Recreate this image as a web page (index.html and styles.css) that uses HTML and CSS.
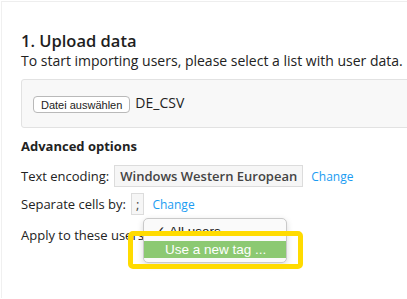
FILE: index.html
```html
<!DOCTYPE html>
<html lang="en">
<head>
    <meta charset="UTF-8">
    <meta name="viewport" content="width=device-width, initial-scale=1.0">
    <title>Import users</title>
    <link rel="stylesheet" href="styles.css">
</head>
<body>

<div class="page">
    <h1 class="step-title">1. Upload data</h1>
    <p class="step-text">To start importing users, please select a list with user data.</p>

    <div class="upload-box">
        <button class="file-button">Datei auswählen</button>
        <span class="file-name">DE_CSV</span>
    </div>

    <h2 class="options-title">Advanced options</h2>

    <div class="options">
        <div class="option-row">
            <span class="option-label">Text encoding:</span>
            <span class="option-value">Windows Western European</span>
            <a class="option-link" href="#">Change</a>
        </div>
        <div class="option-row">
            <span class="option-label">Separate cells by:</span>
            <span class="option-value small">;</span>
            <a class="option-link" href="#">Change</a>
        </div>
        <div class="option-row apply-row">
            <span class="option-label">Apply to these users:</span>

            <div class="menu">
                <div class="menu-item"><span class="check">✓</span>All users</div>
                <div class="menu-item active">Use a new tag ...</div>
            </div>
            <div class="highlight"></div>
        </div>
    </div>
</div>

</body>
</html>
```

FILE: styles.css
```css
body {
    margin: 0;
    background-color: #fff;
    font-family: "Open Sans", "Noto Sans", sans-serif;
    color: #222;
}
.page {
    margin: 1px 0 0 1px;
    border-top: 1px solid #eeeeee;
    border-left: 1px solid #f0f0f0;
    min-height: 297px;
    box-sizing: border-box;
    padding: 28px 0 0 19px;
    overflow: hidden;
}
.step-title {
    margin: 0;
    font-size: 16.5px;
    line-height: 22px;
    font-weight: 600;
    color: #1e1e1e;
}
.step-text {
    margin: 1px 0 0;
    font-size: 14px;
    line-height: 16px;
    white-space: nowrap;
}
.upload-box {
    margin-top: 10px;
    margin-right: -20px;
    height: 45px;
    display: flex;
    align-items: center;
    gap: 5px;
    padding: 2px 11px 0;
    background-color: #f8f8f8;
    border: 1px solid #e2e2e2;
    border-radius: 3px;
}
.file-button {
    height: 17px;
    padding: 0 7px;
    font-family: "Liberation Sans", Arial, sans-serif;
    font-size: 11px;
    color: #222;
    background-color: #fff;
    border: 1px solid #b9b9b9;
    border-radius: 4px;
}
.file-name {
    font-size: 14px;
    margin-top: -5px;
}
.options-title {
    margin: 9px 0 0;
    font-size: 13px;
    line-height: 18px;
    font-weight: 700;
}
.options {
    margin-top: 10px;
    display: flex;
    flex-direction: column;
    gap: 6px;
}
.option-row {
    display: flex;
    align-items: center;
    height: 22px;
    font-size: 13px;
}
.option-label {
    margin-right: 5px;
    white-space: nowrap;
}
.option-value {
    height: 22px;
    box-sizing: border-box;
    display: flex;
    align-items: center;
    padding: 0 5px;
    font-weight: 600;
    color: #444;
    background-color: #f6f6f6;
    border: 1px solid #dcdcdc;
}
.option-value.small {
    padding: 0 4px;
    font-weight: 400;
}
.option-link {
    margin-left: 8px;
    font-size: 12px;
    color: #1a9cf2;
    text-decoration: none;
}
.apply-row {
    position: relative;
    margin-top: 3px;
}
.menu {
    position: absolute;
    left: 122px;
    top: -6px;
    width: 142px;
    padding: 0 0 4px;
    background-color: #fafafa;
    border: 1px solid #c9c9c9;
    border-radius: 5px;
    box-shadow: 0 2px 6px rgba(0, 0, 0, 0.15);
    font-family: "Liberation Sans", Arial, sans-serif;
    font-size: 13.5px;
}
.menu-item {
    height: 17px;
    line-height: 17px;
    padding-left: 21px;
    color: #222;
}
.menu-item:first-child {
    height: 22px;
    line-height: 26px;
    padding-left: 10px;
}
.check {
    margin-right: 3px;
}
.menu-item.active {
    background-color: #8cc972;
    color: #fff;
}
.highlight {
    position: absolute;
    left: 107px;
    top: 7px;
    width: 165px;
    height: 28px;
    border: 5px solid #ffdb00;
    border-radius: 5px;
}
```
